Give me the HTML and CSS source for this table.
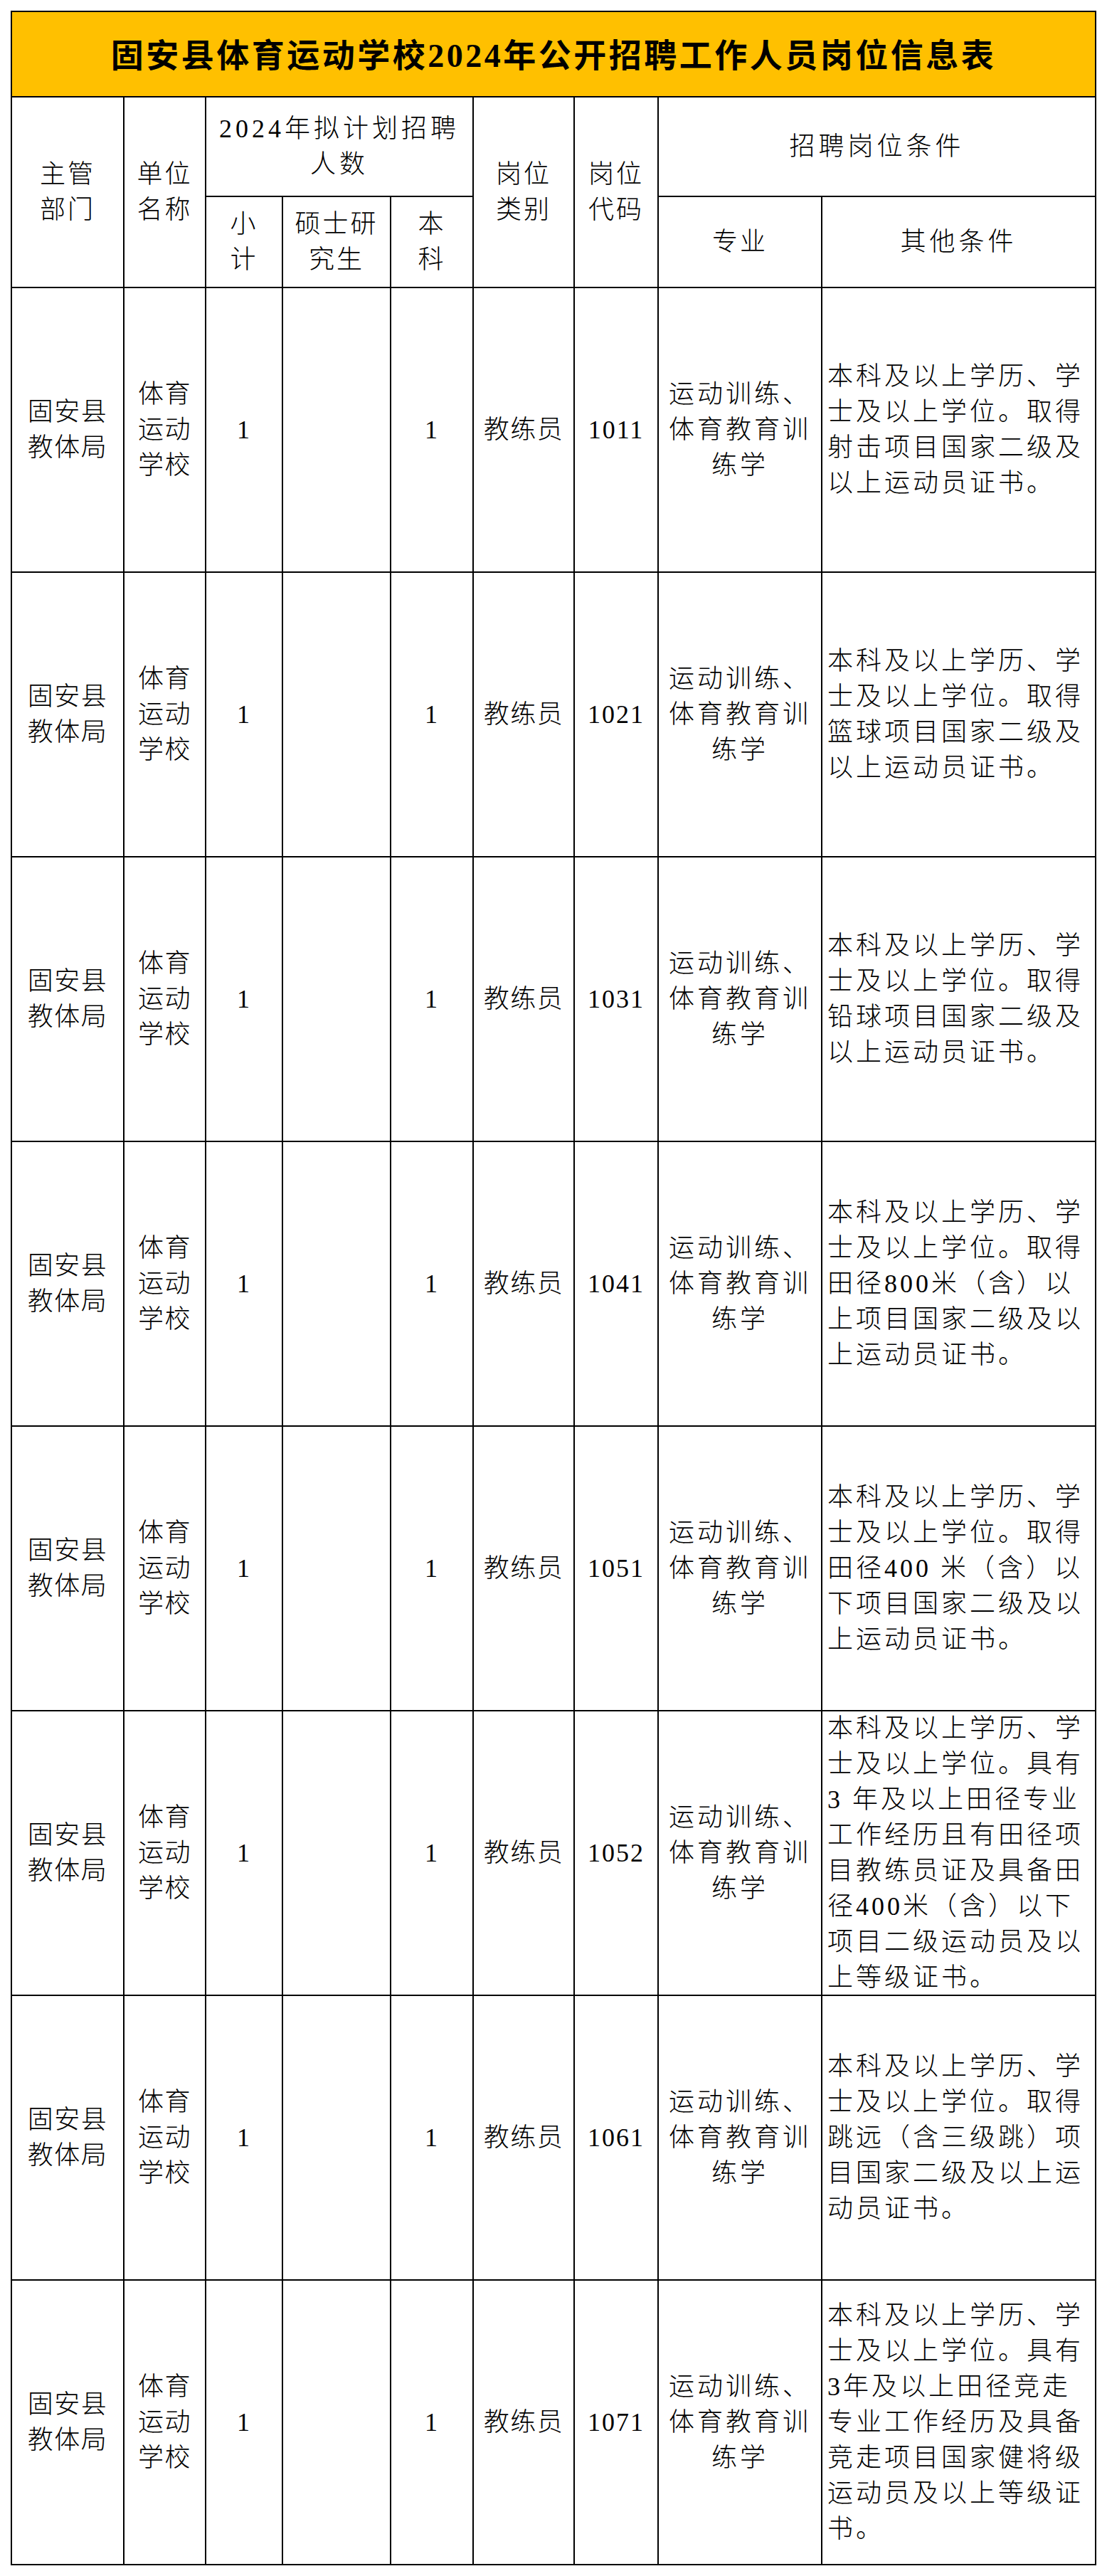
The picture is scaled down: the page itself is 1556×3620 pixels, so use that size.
FILE: index.html
```html
<!DOCTYPE html>
<html lang="zh-CN">
<head>
<meta charset="utf-8">
<title>固安县体育运动学校2024年公开招聘工作人员岗位信息表</title>
<link rel="stylesheet" href="styles.css">
</head>
<body>
<div class="sheet">
  <div class="c title">固安县体育运动学校2024年公开招聘工作人员岗位信息表</div>

  <div class="c hd rs2">主管<br>部门</div>
  <div class="c hd rs2">单位<br>名称</div>
  <div class="c hd cs3 wide">2024年拟计划招聘<br>人数</div>
  <div class="c hd rs2">岗位<br>类别</div>
  <div class="c hd rs2">岗位<br>代码</div>
  <div class="c hd cs2 wide">招聘岗位条件</div>
  <div class="c hd">小<br>计</div>
  <div class="c hd">硕士研<br>究生</div>
  <div class="c hd">本<br>科</div>
  <div class="c hd">专业</div>
  <div class="c hd wide">其他条件</div>

  <!-- row 1011 -->
  <div class="c dt">固安县<br>教体局</div>
  <div class="c dt">体育<br>运动<br>学校</div>
  <div class="c num">1</div>
  <div class="c"></div>
  <div class="c num">1</div>
  <div class="c dt">教练员</div>
  <div class="c num">1011</div>
  <div class="c mj">运动训练、<br>体育教育训<br>练学</div>
  <div class="c cond"><div><span class="ln">本科及以上学历、学</span><span class="ln">士及以上学位。取得</span><span class="ln">射击项目国家二级及</span><span class="ln">以上运动员证书。</span></div></div>

  <!-- row 1021 -->
  <div class="c dt">固安县<br>教体局</div>
  <div class="c dt">体育<br>运动<br>学校</div>
  <div class="c num">1</div>
  <div class="c"></div>
  <div class="c num">1</div>
  <div class="c dt">教练员</div>
  <div class="c num">1021</div>
  <div class="c mj">运动训练、<br>体育教育训<br>练学</div>
  <div class="c cond"><div><span class="ln">本科及以上学历、学</span><span class="ln">士及以上学位。取得</span><span class="ln">篮球项目国家二级及</span><span class="ln">以上运动员证书。</span></div></div>

  <!-- row 1031 -->
  <div class="c dt">固安县<br>教体局</div>
  <div class="c dt">体育<br>运动<br>学校</div>
  <div class="c num">1</div>
  <div class="c"></div>
  <div class="c num">1</div>
  <div class="c dt">教练员</div>
  <div class="c num">1031</div>
  <div class="c mj">运动训练、<br>体育教育训<br>练学</div>
  <div class="c cond"><div><span class="ln">本科及以上学历、学</span><span class="ln">士及以上学位。取得</span><span class="ln">铅球项目国家二级及</span><span class="ln">以上运动员证书。</span></div></div>

  <!-- row 1041 -->
  <div class="c dt">固安县<br>教体局</div>
  <div class="c dt">体育<br>运动<br>学校</div>
  <div class="c num">1</div>
  <div class="c"></div>
  <div class="c num">1</div>
  <div class="c dt">教练员</div>
  <div class="c num">1041</div>
  <div class="c mj">运动训练、<br>体育教育训<br>练学</div>
  <div class="c cond"><div><span class="ln">本科及以上学历、学</span><span class="ln">士及以上学位。取得</span><span class="ln">田径800米（含）以</span><span class="ln">上项目国家二级及以</span><span class="ln">上运动员证书。</span></div></div>

  <!-- row 1051 -->
  <div class="c dt">固安县<br>教体局</div>
  <div class="c dt">体育<br>运动<br>学校</div>
  <div class="c num">1</div>
  <div class="c"></div>
  <div class="c num">1</div>
  <div class="c dt">教练员</div>
  <div class="c num">1051</div>
  <div class="c mj">运动训练、<br>体育教育训<br>练学</div>
  <div class="c cond"><div><span class="ln">本科及以上学历、学</span><span class="ln">士及以上学位。取得</span><span class="ln">田径400 米（含）以</span><span class="ln">下项目国家二级及以</span><span class="ln">上运动员证书。</span></div></div>

  <!-- row 1052 -->
  <div class="c dt">固安县<br>教体局</div>
  <div class="c dt">体育<br>运动<br>学校</div>
  <div class="c num">1</div>
  <div class="c"></div>
  <div class="c num">1</div>
  <div class="c dt">教练员</div>
  <div class="c num">1052</div>
  <div class="c mj">运动训练、<br>体育教育训<br>练学</div>
  <div class="c cond"><div><span class="ln">本科及以上学历、学</span><span class="ln">士及以上学位。具有</span><span class="ln">3 年及以上田径专业</span><span class="ln">工作经历且有田径项</span><span class="ln">目教练员证及具备田</span><span class="ln">径400米（含）以下</span><span class="ln">项目二级运动员及以</span><span class="ln">上等级证书。</span></div></div>

  <!-- row 1061 -->
  <div class="c dt">固安县<br>教体局</div>
  <div class="c dt">体育<br>运动<br>学校</div>
  <div class="c num">1</div>
  <div class="c"></div>
  <div class="c num">1</div>
  <div class="c dt">教练员</div>
  <div class="c num">1061</div>
  <div class="c mj">运动训练、<br>体育教育训<br>练学</div>
  <div class="c cond"><div><span class="ln">本科及以上学历、学</span><span class="ln">士及以上学位。取得</span><span class="ln">跳远（含三级跳）项</span><span class="ln">目国家二级及以上运</span><span class="ln">动员证书。</span></div></div>

  <!-- row 1071 -->
  <div class="c dt">固安县<br>教体局</div>
  <div class="c dt">体育<br>运动<br>学校</div>
  <div class="c num">1</div>
  <div class="c"></div>
  <div class="c num">1</div>
  <div class="c dt">教练员</div>
  <div class="c num">1071</div>
  <div class="c mj">运动训练、<br>体育教育训<br>练学</div>
  <div class="c cond"><div><span class="ln">本科及以上学历、学</span><span class="ln">士及以上学位。具有</span><span class="ln">3年及以上田径竞走</span><span class="ln">专业工作经历及具备</span><span class="ln">竞走项目国家健将级</span><span class="ln">运动员及以上等级证</span><span class="ln">书。</span></div></div>
</div>
</body>
</html>
```

FILE: styles.css
```css
html, body {
  margin: 0;
  padding: 0;
  background: #ffffff;
}

.sheet {
  display: grid;
  grid-template-columns: 156px 113px 106px 150px 114px 140px 116px 228px 383px;
  grid-template-rows: 118px 138px 126px repeat(8, 398px);
  gap: 2px;
  padding: 2px;
  background: #000000;
  width: max-content;
  margin: 15px 0 0 15px;
  font-family: "Liberation Serif", "Noto Sans CJK SC", serif;
  font-size: 36px;
  line-height: 50px;
  font-weight: 300;
  color: #000000;
}

.c {
  background: #ffffff;
  display: flex;
  align-items: center;
  justify-content: center;
  text-align: center;
  overflow: hidden;
}

.title {
  grid-column: 1 / -1;
  background: #ffc000;
  font-size: 46px;
  line-height: 60px;
  font-weight: 700;
  letter-spacing: 3.5px;
  padding-top: 6px;
  box-sizing: border-box;
  white-space: nowrap;
}

.rs2 {
  grid-row: span 2;
}

.cs3 {
  grid-column: span 3;
}

.cs2 {
  grid-column: span 2;
}

.hd {
  letter-spacing: 3px;
}

.hd.wide {
  letter-spacing: 5px;
}

.dt {
  letter-spacing: 1.5px;
}

.num {
  letter-spacing: 2px;
}

.mj {
  letter-spacing: 4px;
}

.cond {
  justify-content: flex-start;
  text-align: left;
  padding-left: 7px;
  letter-spacing: 4px;
}

.ln {
  display: block;
  white-space: pre;
}
```
